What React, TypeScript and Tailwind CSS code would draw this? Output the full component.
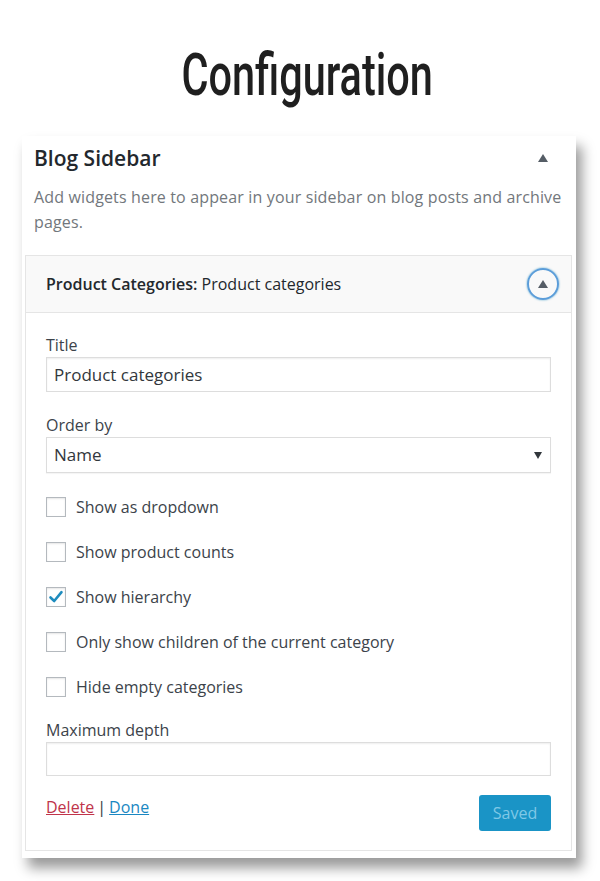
import React from 'react';

const font = { fontFamily: '"Open Sans", "Noto Sans", sans-serif' };

function Check({ label, checked }: { label: string; checked?: boolean }) {
  return (
    <div className="flex h-[45px] items-center">
      <span className="flex h-[20px] w-[20px] items-center justify-center border border-[#b4b9be] bg-white shadow-[inset_0_1px_2px_rgba(0,0,0,0.1)]">
        {checked && (
          <svg width="16" height="16" viewBox="0 0 16 16">
            <path d="M2.5 8.5 L6.2 12 L13.5 3.2" fill="none" stroke="#1e8cbe" strokeWidth="2.6" strokeLinecap="round" strokeLinejoin="round" />
          </svg>
        )}
      </span>
      <span className="ml-[10px] text-[16px] leading-5 text-[#3c434a]">{label}</span>
    </div>
  );
}

export default function App() {
  return (
    <div className="h-[881px] w-[600px] overflow-hidden bg-white" style={font}>
      {/* Heading */}
      <div className="flex h-[136px] justify-center pl-[14px] pt-[43px]">
        <h1
          className="inline-block origin-center scale-x-[0.69] text-[60px] font-medium leading-[64px] text-[#1f1f1f]"
          style={{ fontFamily: 'Roboto, "Liberation Sans", sans-serif' }}
        >
          Configuration
        </h1>
      </div>

      {/* Sidebar panel */}
      <div className="ml-[22px] w-[554px] bg-white pb-[7px] shadow-[6px_10px_12px_rgba(0,0,0,0.4)]">
        <div className="flex items-center justify-between pl-[12px] pr-[28px] pt-[8px]">
          <h2 className="text-[21px] font-semibold leading-[28px] text-[#23282d]">Blog Sidebar</h2>
          <svg width="10" height="8" viewBox="0 0 10 8">
            <path d="M0 8 L5 0 L10 8 Z" fill="#555d66" />
          </svg>
        </div>
        <p className="mt-[13px] pl-[12px] pr-[10px] text-[16px] leading-[25px] tracking-[0.15px] text-[#72777c]">
          Add widgets here to appear in your sidebar on blog posts and archive pages.
        </p>

        {/* Widget */}
        <div className="ml-[3px] mr-[4px] mt-[20px] border border-[#e5e5e5] bg-white">
          <div className="flex h-[57px] items-center justify-between border-b border-[#e5e5e5] bg-[#f9f9f9] pl-[20px] pr-[12px]">
            <span className="text-[16px] text-[#23282d]">
              <span className="font-semibold">Product Categories:</span> Product categories
            </span>
            <span className="flex h-[32px] w-[32px] items-center justify-center rounded-full border-2 border-[#5b9dd9] shadow-[0_0_2px_rgba(30,140,190,0.8)]">
              <svg width="10" height="8" viewBox="0 0 10 8">
                <path d="M0 8 L5 0 L10 8 Z" fill="#555d66" />
              </svg>
            </span>
          </div>

          <div className="px-[20px] pb-[19px] pt-[22px]">
            <label className="block text-[16px] leading-5 text-[#3c434a]">Title</label>
            <div className="mt-[2px] flex h-[35px] items-center border border-[#dddddd] px-[7px] text-[17px] text-[#32373c] shadow-[inset_0_1px_2px_rgba(0,0,0,0.07)]">
              Product categories
            </div>

            <label className="mt-[23px] block text-[16px] leading-5 text-[#3c434a]">Order by</label>
            <div className="mt-[2px] flex h-[36px] items-center justify-between border border-[#dddddd] pl-[7px] pr-[8px] text-[17px] text-[#32373c] shadow-[0_1px_1px_rgba(0,0,0,0.04)]">
              <span>Name</span>
              <svg width="8" height="7" viewBox="0 0 8 7">
                <path d="M0 0 L8 0 L4 7 Z" fill="#32373c" />
              </svg>
            </div>

            <div className="mt-[11px]">
              <Check label="Show as dropdown" />
              <Check label="Show product counts" />
              <Check label="Show hierarchy" checked />
              <Check label="Only show children of the current category" />
              <Check label="Hide empty categories" />
            </div>

            <label className="mt-[11px] block text-[16px] leading-5 text-[#3c434a]">Maximum depth</label>
            <div className="mt-[2px] h-[34px] border border-[#dddddd] shadow-[inset_0_1px_2px_rgba(0,0,0,0.07)]" />

            <div className="mt-[19px] flex items-start justify-between">
              <div className="mt-[2px] text-[16px] leading-5 text-[#32373c]">
                <span className="text-[#c0344a] underline">Delete</span>
                <span className="mx-[3px]">|</span>
                <span className="text-[#1a87c2] underline">Done</span>
              </div>
              <span className="flex h-[36px] w-[72px] items-center justify-center rounded-[3px] bg-[#1a94c6] text-[16px] text-[#7fc8e6]">
                Saved
              </span>
            </div>
          </div>
        </div>
      </div>
    </div>
  );
}
